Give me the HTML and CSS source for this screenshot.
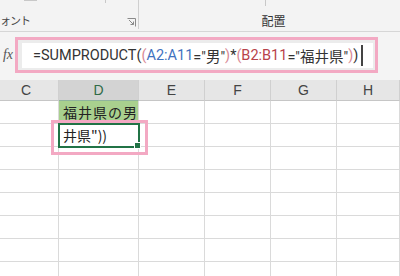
FILE: index.html
```html
<!DOCTYPE html>
<html>

<head>
  <title>SUMPRODUCT</title>
  <link rel="stylesheet" href="styles.css">
</head>

<body>
  <div class="ribbon">
    <div class="group group-font">
      <span class="mark mark-a"></span>
      <span class="mark mark-b"></span>
      <div class="group-label">ォント</div>
      <svg class="launcher" width="9" height="9" viewBox="0 0 9 9">
        <path d="M0.5 0.5H8.5V8.5" fill="none" stroke="#8a8a8a" stroke-width="1"/>
        <path d="M2 2L6.5 6.5M6.5 3.5V6.5H3.5" fill="none" stroke="#8a8a8a" stroke-width="1"/>
      </svg>
    </div>
    <div class="group group-align">
      <span class="mark mark-c"></span>
      <div class="group-label">配置</div>
    </div>
  </div>

  <div class="formula-row">
    <div class="fx"><span>fx</span></div>
    <div class="formula-frame">
      <div class="formula-input">
        <span class="tx">=SUMPRODUCT(</span><span class="paren">(</span><span class="ref-a">A2:A11</span><span class="tx">="男"</span><span class="paren">)</span><span class="tx">*</span><span class="paren">(</span><span class="ref-b">B2:B11</span><span class="tx">="福井県"</span><span class="paren">)</span><span class="tx">)</span><span class="caret"></span>
      </div>
    </div>
  </div>

  <div class="sheet">
    <div class="head col-c">C</div>
    <div class="head active">D</div>
    <div class="head">E</div>
    <div class="head">F</div>
    <div class="head">G</div>
    <div class="head">H</div>

    <div class="cell"></div>
    <div class="cell label">福井県の男</div>
    <div class="cell"></div>
    <div class="cell"></div>
    <div class="cell"></div>
    <div class="cell"></div>

    <div class="cell"></div>
    <div class="cell selected">井県"))<span class="note"></span></div>
    <div class="cell"></div>
    <div class="cell"></div>
    <div class="cell"></div>
    <div class="cell"></div>

    <div class="cell"></div><div class="cell"></div><div class="cell"></div><div class="cell"></div><div class="cell"></div><div class="cell"></div>
    <div class="cell"></div><div class="cell"></div><div class="cell"></div><div class="cell"></div><div class="cell"></div><div class="cell"></div>
    <div class="cell"></div><div class="cell"></div><div class="cell"></div><div class="cell"></div><div class="cell"></div><div class="cell"></div>
    <div class="cell"></div><div class="cell"></div><div class="cell"></div><div class="cell"></div><div class="cell"></div><div class="cell"></div>
    <div class="cell"></div><div class="cell"></div><div class="cell"></div><div class="cell"></div><div class="cell"></div><div class="cell"></div>
    <div class="cell"></div><div class="cell"></div><div class="cell"></div><div class="cell"></div><div class="cell"></div><div class="cell"></div>
  </div>
</body>

</html>
```

FILE: styles.css
```css
body {
  margin: 0;
  overflow: hidden;
  font-family: "Liberation Sans", "Noto Sans CJK JP", sans-serif;
  color: #222;
  background: #fff;
}

/* ribbon */
.ribbon {
  display: flex;
  height: 31px;
  background: #f3f3f3;
  border-bottom: 1px solid #d6d6d6;
}

.group {
  position: relative;
  display: flex;
  align-items: flex-end;
  padding-bottom: 2px;
  box-sizing: border-box;
}

.group-font {
  width: 139px;
  border-right: 1px solid #cfcfcf;
  height: 29px;
  justify-content: space-between;
  padding-right: 2px;
}

.group-align {
  flex: 1;
  justify-content: center;
  margin-right: -8px;
}

.group-label {
  font-family: "Noto Sans CJK JP", sans-serif;
  font-size: 11px;
  line-height: 14px;
  color: #444;
}

.group-font .group-label {
  letter-spacing: -1px;
}

.group-align .group-label {
  font-size: 12px;
  color: #333;
  padding-bottom: 1px;
}

.mark {
  position: absolute;
  top: 0;
  background: #c8c8c8;
}

.mark-a {
  left: 24px;
  width: 13px;
  height: 1px;
}

.mark-b {
  left: 105px;
  width: 1px;
  height: 3px;
}

.mark-c {
  left: 126px;
  width: 1px;
  height: 6px;
}

/* formula bar */
.formula-row {
  display: flex;
  height: 48px;
  padding-top: 5px;
  box-sizing: border-box;
  background: #f4f4f4;
}

.fx {
  width: 15px;
  height: 36px;
  overflow: hidden;
  display: flex;
  justify-content: flex-end;
  align-items: center;
}

.fx span {
  font-family: "Liberation Serif", serif;
  font-style: italic;
  font-size: 14px;
  color: #555;
  padding-right: 2px;
}

.formula-frame {
  width: 363px;
  height: 36px;
  box-sizing: border-box;
  border: 3px solid #f3a9c3;
  padding: 3px 2px 2px 4px;
  background: #ececec;
}

.formula-input {
  height: 100%;
  background: #fff;
  display: flex;
  align-items: center;
  padding-left: 11px;
  font-family: Roboto, "Noto Sans CJK JP", sans-serif;
  font-size: 14.5px;
  white-space: nowrap;
}

.tx {
  color: #333;
}

.paren {
  color: #d88a96;
}

.ref-a {
  color: #3f72c0;
}

.ref-b {
  color: #b8424a;
}

.caret {
  width: 2px;
  height: 21px;
  margin-left: 3px;
  background: #444;
}

/* sheet */
.sheet {
  display: grid;
  grid-template-columns: 59px 80px 66px 66px 66px 63px;
  grid-auto-rows: 23px;
  grid-template-rows: 21px;
}

.head {
  display: flex;
  align-items: center;
  justify-content: center;
  background: #e6e6e6;
  border-right: 1px solid #d0d0d0;
  border-bottom: 1px solid #c6c6c6;
  font-size: 14px;
  color: #444;
}

.col-c {
  padding-right: 6px;
}

.head.active {
  background: #d3d3d3;
  color: #2f6b47;
  border-bottom: 1px solid #8fb39d;
}

.cell {
  border-right: 1px solid #dadada;
  border-bottom: 1px solid #dadada;
  font-family: "Noto Sans CJK JP", sans-serif;
  font-size: 14px;
  display: flex;
  align-items: center;
  padding-left: 4px;
  white-space: nowrap;
}

.label {
  background: #a9d08e;
  letter-spacing: 1px;
}

.selected {
  position: relative;
  outline: 2px solid #217346;
  outline-offset: -1px;
}

.selected::after {
  content: "";
  position: absolute;
  right: -3px;
  bottom: -3px;
  width: 5px;
  height: 5px;
  background: #217346;
  border: 1px solid #fff;
}

.note {
  position: absolute;
  left: -8px;
  top: -4px;
  right: -10px;
  bottom: -9px;
  border: 3px solid #f3a9c3;
}
```
